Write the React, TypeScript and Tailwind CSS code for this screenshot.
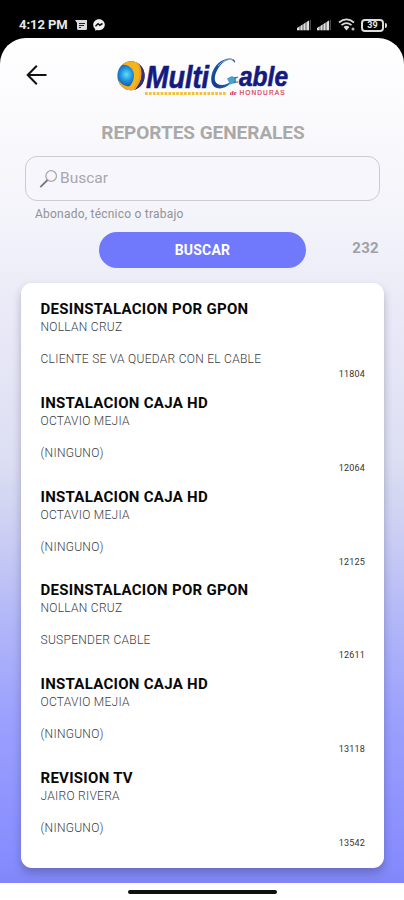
const reports = [
  { title: 'DESINSTALACION POR GPON', name: 'NOLLAN CRUZ', note: 'CLIENTE SE VA QUEDAR CON EL CABLE', id: '11804' },
  { title: 'INSTALACION CAJA HD', name: 'OCTAVIO MEJIA', note: '(NINGUNO)', id: '12064' },
  { title: 'INSTALACION CAJA HD', name: 'OCTAVIO MEJIA', note: '(NINGUNO)', id: '12125' },
  { title: 'DESINSTALACION POR GPON', name: 'NOLLAN CRUZ', note: 'SUSPENDER CABLE', id: '12611' },
  { title: 'INSTALACION CAJA HD', name: 'OCTAVIO MEJIA', note: '(NINGUNO)', id: '13118' },
  { title: 'REVISION TV', name: 'JAIRO RIVERA', note: '(NINGUNO)', id: '13542' },
];

function Signal() {
  return (
    <svg width="15" height="12" viewBox="0 0 15 12">
      <path d="M0 11.2 V9.5 L14 .5 V11.2Z" fill="#4a4a4a" />
      <path d="M0 11.2 V9 L12 1.500 V11.2Z" fill="#dedede" />
      <path d="M3 4V12M6 2V12M9 1V12M12.500 0V12" stroke="#000" strokeWidth=".6" />
    </svg>
  );
}

function StatusBar() {
  return (
    <div className="flex h-[38px] items-start justify-between pr-[17px] pl-[19px] pt-[15px] text-[#e8e8e8]">
      <div className="flex h-5 items-center">
        <span className="w-[49px] whitespace-nowrap text-[13px] font-bold tracking-[-0.05px]">4:12 PM</span>
        <svg className="ml-[7px]" width="12" height="11" viewBox="0 0 12 11">
          <path d="M0 0H12V8.5Q12 10 10.5 10H3.5Q2 10 2 8.5V3Z" fill="#dcdcdc" />
          <path d="M4 3.5H10M4 5.5H9M4 7.5H6" stroke="#222" strokeWidth="1" />
        </svg>
        <svg className="ml-[6px]" width="12" height="12" viewBox="0 0 12 12">
          <path d="M6 .2C2.600.2.2 2.700.2 5.800c0 1.800.8 3.200 2 4.200v1.800l1.800-.9c.6.2 1.300.3 2 .3 3.400 0 5.800-2.400 5.800-5.400S9.400.2 6 .2Z" fill="#f2f2f2" />
          <path d="M2.500 7.300 5 4.700 6.800 6.200 9.500 4.500" fill="none" stroke="#111" strokeWidth="1.500" />
        </svg>
      </div>
      <div className="flex h-5 items-center">
        <Signal />
        <span className="w-[5px]" />
        <Signal />
        <svg className="ml-[6px]" width="18" height="14" viewBox="0 0 18 14" fill="none" stroke="#dcdcdc">
          <path d="M1 4.500Q8.500-1.800 16 4.500M3.500 7.200Q8.500 3 13.500 7.200" strokeWidth="1.700" />
          <path d="M5.500 9.100Q8.500 6.500 11.500 9.100L8.500 12.400Z" fill="#dcdcdc" stroke="none" />
          <circle cx="15" cy="11" r="1.500" fill="#bbb" stroke="none" />
        </svg>
        <div className="ml-[5px] flex h-[13px] w-[23px] items-center justify-center rounded-[4px] border-2 border-[#dcdcdc] text-[9px] font-bold leading-none">39</div>
        <div className="ml-px h-[5px] w-[2px] rounded-r bg-[#dcdcdc]" />
      </div>
    </div>
  );
}

function Logo() {
  return (
    <svg width="184" height="44" viewBox="0 0 184 44" aria-label="MultiCable de Honduras">
      <defs>
        <radialGradient id="globe" cx=".34" cy=".45" r=".55">
          <stop offset="0" stopColor="#5ce0fa" />
          <stop offset=".4" stopColor="#1e90dc" />
          <stop offset="1" stopColor="#1a2283" />
        </radialGradient>
        <linearGradient id="cable" x1="0" y1="0" x2="1" y2="1">
          <stop offset="0" stopColor="#1d62b4" />
          <stop offset=".55" stopColor="#123a8d" />
          <stop offset="1" stopColor="#2f86c9" />
        </linearGradient>
        <clipPath id="ball"><ellipse cx="17" cy="20.700" rx="13.600" ry="14.500" /></clipPath>
      </defs>
      <g clipPath="url(#ball)">
        <rect x="3" y="6" width="28" height="30" fill="url(#globe)" />
        <path d="M7 10C11 3 20 3 25 9C31 17 27 30 18 37H9C18 31 23 22 18 14C15 10 11 9 7 10Z" fill="#f6b41b" />
        <path d="M20 4C29 11 30 23 22 36L34 32V8Z" fill="#3a2f7e" />
        <path d="M24 9C28 16 27 26 20 34" fill="none" stroke="#e9a422" strokeWidth="2" />
        <path d="M4 24C7 30 12 32 18 31L16 37L6 34Z" fill="#f3ad22" />
      </g>
      <g fontFamily="'Liberation Sans Narrow', 'Liberation Sans', Arial, sans-serif" fontWeight="700" fontStyle="italic" fill="#151a80" stroke="#151a80" strokeWidth=".6">
        <text x="32" y="32.700" fontSize="31" textLength="63" lengthAdjust="spacingAndGlyphs">Multi</text>
        <text x="125" y="30.500" fontSize="27.500" textLength="49" lengthAdjust="spacingAndGlyphs">able</text>
      </g>
      <path d="M120.500 8C119 3 112 4 106.500 10C101 17 98.500 26 103.500 29C108 31.500 114 29 118 26C115 32 106 35.500 100.500 32C94.500 27 97 15 104.500 8C111 2.500 120 2 121 6.500Z" fill="url(#cable)" />
      <path d="M104 11C108 6 114 3.500 119 5" fill="none" stroke="#7cc5ea" strokeWidth="1" />
      <path d="M113 23.500L118 21L122.500 23.500L121.500 28L116 29.500Z" fill="#4b9fce" />
      <path d="M120 23L124 22M120 27L124 27" stroke="#245a9b" strokeWidth="1" />
      <path d="M31 38.500H113" stroke="#efc23d" strokeWidth="2.800" strokeDasharray="2.700 1.200" />
      <text x="116" y="40" fontFamily="'Liberation Serif', serif" fontStyle="italic" fontWeight="700" fontSize="7" fill="#c51f4c">de</text>
      <text x="125.500" y="40" fontFamily="'Liberation Sans', Arial, sans-serif" fontSize="6.500" fill="#d83b57" stroke="#d83b57" strokeWidth=".2" textLength="45">HONDURAS</text>
    </svg>
  );
}

export default function App() {
  return (
    <div className="flex h-[900px] w-[404px] flex-col overflow-hidden bg-black font-[Roboto,sans-serif]">
      <StatusBar />
      <main className="flex h-[845px] flex-col rounded-t-[26px] bg-[linear-gradient(180deg,#ffffff_0%,#fafafd_10%,#f3f3fa_22%,#ebebf8_31%,#dcdef2_50%,#cbcef3_59%,#b4b9f8_68%,#9ca1fd_80%,#858bfd_98%,#8086f5_100%)]">
        <header className="flex h-[74px] items-start">
          <svg className="ml-[26px] mt-[27px]" width="22" height="20" viewBox="0 0 22 20" fill="none" stroke="#111" strokeWidth="2">
            <path d="M20.500 10H2M10.800 .8L1.700 10L10.800 19.200" />
          </svg>
          <div className="ml-[66px] mt-[17px]"><Logo /></div>
        </header>
        <h1 className="h-[44px] pt-[8px] pl-[2px] text-center text-[19px] font-bold leading-[26px] tracking-[-0.04px] text-[#a9a9a9]">REPORTES GENERALES</h1>
        <div className="ml-[25px] flex h-[45px] w-[355px] items-center rounded-[12px] border border-[#cbcbd0] bg-[#f7f6fd] pl-[13px] text-[#a7a7ad]">
          <svg width="19" height="20" viewBox="0 0 19 20" fill="none">
            <circle cx="12.200" cy="7" r="5.300" stroke="#aaa" strokeWidth="1.300" />
            <path d="M8.500 11L1.300 18.200" stroke="#77777a" strokeWidth="1.800" />
          </svg>
          <span className="ml-[2px] text-[15.5px]">Buscar</span>
        </div>
        <p className="ml-[35px] mt-[5px] h-[16px] text-[12px] leading-[16px] tracking-[0.22px] text-[#929298]">Abonado, técnico o trabajo</p>
        <div className="mt-[10px] flex h-[36px] items-center pl-[99px] pr-[25px]">
          <button className="h-[36px] w-[207px] rounded-full bg-[#7079fb] text-[14px] font-bold tracking-[0.2px] text-white">BUSCAR</button>
          <span className="ml-auto pb-[4px] text-[15px] font-bold tracking-[0.3px] text-[#a0a0a4]">232</span>
        </div>
        <section className="ml-[21px] mt-[15px] h-[585px] w-[363px] rounded-[11px] bg-white pl-[19.5px] pr-[19px] pt-[16px] shadow-[0_5px_9px_rgba(40,40,70,0.3)]">
          {reports.map((r) => (
            <article key={r.id} className="h-[93.75px]">
              <h2 className="text-[15px] font-bold leading-[20px] tracking-[0.28px] text-[#080808]">{r.title}</h2>
              <p className="text-[12px] font-light leading-[17px] tracking-[0.28px] text-[#3c3c3f]">{r.name}</p>
              <p className="mt-[15px] text-[12px] font-light leading-[17px] tracking-[0.28px] text-[#3c3c3f]">{r.note}</p>
              <p className="text-right text-[9px] leading-[12px] tracking-[0.2px] text-[#333]">{r.id}</p>
            </article>
          ))}
        </section>
      </main>
      <div className="flex h-[17px] justify-center bg-white pt-[7px]">
        <div className="h-[4px] w-[149px] rounded-full bg-[#101010]" />
      </div>
    </div>
  );
}
